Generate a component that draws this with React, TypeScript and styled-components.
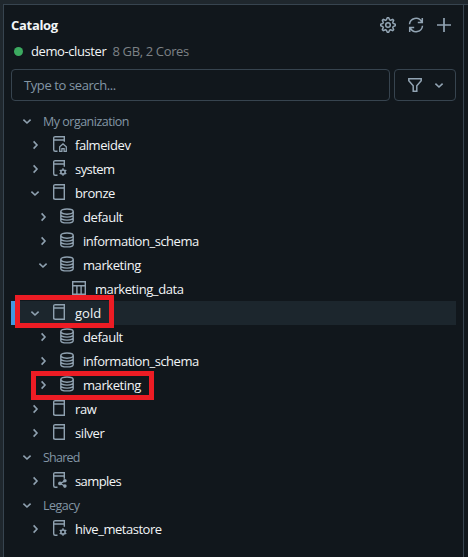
import React from "react";
import styled, { createGlobalStyle } from "styled-components";

const Global = createGlobalStyle`
  * { box-sizing: border-box; }
  body { margin: 0; background: #11171c; overflow: hidden; font-family: "Open Sans", "Noto Sans", sans-serif; font-size: 13px; color: #f2f5f7; }
  svg { display: block; flex: none; }
`;

const Frame = styled.div`
  position: relative;
  width: 468px;
  height: 557px;
  display: grid;
  grid-template-columns: 3px 461px 4px;
  grid-template-rows: 4px 553px;
  background: #11171c;
`;
const TopStrip = styled.div`
  grid-column: 1 / -1;
  background: #1f272d;
`;
const SideStrip = styled.div`
  background: #1f272d;
`;
const Panel = styled.section`
  border: solid #37444f;
  border-width: 1px 1px 0 1px;
  padding: 8px 7px 0;
`;
const RightStrip = styled.div`
  border-top: 1px solid #37444f;
`;
const Header = styled.header`
  height: 24px;
  display: flex;
  align-items: center;
  justify-content: space-between;
`;
const Text = styled.span<{ $spacing?: number; $tone?: string }>`
  letter-spacing: ${(p) => p.$spacing ?? -0.42}px;
  color: ${(p) => p.$tone ?? "#f2f5f7"};
  white-space: nowrap;
  line-height: 20px;
`;
const GroupText = styled(Text)`
  font-size: 12.5px;
  padding-top: 2px;
  color: #8396a5;
`;
const Title = styled.h1`
  margin: 0;
  font-size: 13px;
  line-height: 20px;
  font-weight: 700;
  letter-spacing: -0.3px;
`;
const Actions = styled.div`
  display: flex;
  gap: 12px;
  padding-right: 4px;
  color: #92a4b3;
`;
const Cluster = styled.div`
  height: 28px;
  display: flex;
  align-items: center;
`;
const StatusDot = styled.span`
  width: 9px;
  height: 9px;
  margin: 0 8px 0 3px;
  border-radius: 50%;
  background: #3caa60;
`;
const Specs = styled.span`
  margin-left: 6px;
  display: flex;
`;
const Controls = styled.div`
  margin-top: 4px;
  height: 32px;
  display: grid;
  grid-template-columns: 379px 62px;
  gap: 4px;
`;
const Field = styled.div`
  border: 1px solid #37444f;
  border-radius: 4px;
  padding-left: 12px;
  display: flex;
  align-items: center;
`;
const FilterButton = styled.button`
  border: 1px solid #37444f;
  border-radius: 4px;
  background: none;
  padding: 0 8px 0 12px;
  display: flex;
  align-items: center;
  justify-content: space-between;
  color: #92a4b3;
`;
const Tree = styled.div`
  margin-top: 8px;
`;
const Row = styled.div<{ $level: number; $active?: boolean }>`
  height: 24px;
  display: flex;
  align-items: center;
  padding-left: ${(p) => 8 + p.$level * 8}px;
  color: #8fa1b0;
  ${(p) => p.$active && "background: #1c262d; box-shadow: inset 4px 0 0 #4299e0;"}
`;
const IconSlot = styled.span`
  width: 16px;
  height: 16px;
  margin: 0 8px 2px 8px;
`;
const ChevronSlot = styled.span<{ $group?: boolean }>`
  width: 16px;
  height: 16px;
  margin: 0 ${(p) => (p.$group ? 8 : 0)}px 1px 0;
`;
const RedBox = styled.div<{ $x: number; $y: number; $w: number; $h: number }>`
  position: absolute;
  left: ${(p) => p.$x}px;
  top: ${(p) => p.$y}px;
  width: ${(p) => p.$w}px;
  height: ${(p) => p.$h}px;
  border: 5px solid #ed1c24;
`;

const Icon = ({ children, sw = 1.4 }: { children: React.ReactNode; sw?: number }) => (
  <svg width="16" height="16" viewBox="0 0 16 16" fill="none" stroke="currentColor" strokeWidth={sw}>
    {children}
  </svg>
);
const Chevron = ({ open }: { open?: boolean }) => (
  <Icon sw={1.6}>
    <path d={open ? "M4.4 6.6 8 10l3.6-3.4" : "M6.6 4.4 10 8l-3.4 3.6"} />
  </Icon>
);

type Kind = "home" | "system" | "catalog" | "schema" | "table" | "share";

const gearPath = Array.from({ length: 32 }, (_, i) => {
  const r = i % 4 < 2 ? 7.3 : 5.4;
  const a = ((i - 0.5) * Math.PI) / 16 - Math.PI / 2;
  return `${i ? "L" : "M"}${(8 + r * Math.cos(a)).toFixed(2)} ${(8 + r * Math.sin(a)).toFixed(2)}`;
}).join("") + "Z";

const SmallGear = () => (
  <>
    <circle cx="12" cy="12" r="2.1" strokeWidth="1.5" />
    <path strokeWidth="1.4" d="M12 8.2v1.7M12 14.1v1.7M8.7 10.1l1.5.9M13.8 13l1.5.9M8.7 13.9l1.5-.9M13.8 11l1.5-.9" />
  </>
);

const KindIcon = ({ kind }: { kind: Kind }) => {
  if (kind === "schema")
    return (
      <Icon>
        <ellipse cx="8" cy="3.6" rx="6.2" ry="2.6" />
        <path d="M1.8 3.6v8.8c0 1.4 2.8 2.5 6.2 2.5s6.2-1.1 6.2-2.5V3.6M1.8 6.6c0 1.4 2.8 2.5 6.2 2.5s6.2-1.1 6.2-2.5M1.8 9.6c0 1.4 2.8 2.5 6.2 2.5s6.2-1.1 6.2-2.5" />
      </Icon>
    );
  if (kind === "table")
    return (
      <Icon>
        <path d="M1.7 1.7h12.6v12.6H1.7zM1.7 5.7h12.6M5.9 5.7v8.6M10.1 5.7v8.6" />
      </Icon>
    );
  if (kind === "catalog")
    return (
      <Icon>
        <path d="M2.7 15.3V2.2C2.7 1.3 3.3.7 4.2.7h9.1v14.6H4.2c-.9 0-1.5-.6-1.5-1.5M2.7 4h10.6" />
      </Icon>
    );
  return (
    <Icon>
      <path d={`M6.5 15.3H4.2c-.9 0-1.5-.6-1.5-1.5V2.2C2.7 1.3 3.3.7 4.2.7h9.1v${kind === "home" ? 5 : 6}M2.9 4h10.4`} />
      {kind === "home" && <path d="M8.7 15.3v-4.6L12 7.9l3.3 2.8v4.6h-2.2v-2.6h-2.2v2.6z" strokeWidth="1.3" />}
      {kind === "system" && <SmallGear />}
      {kind === "share" && (
        <>
          <path d="M9.3 11.4l4.4-2.3M9.3 11.4l4.4 2.7" strokeWidth="1.2" />
          <g fill="currentColor" stroke="none">
            <circle cx="9" cy="11.4" r="1.9" />
            <circle cx="13.9" cy="8.8" r="1.8" />
            <circle cx="13.9" cy="14.1" r="1.8" />
          </g>
        </>
      )}
    </Icon>
  );
};

interface Item {
  label: string;
  level: number;
  kind?: Kind;
  open?: boolean;
  active?: boolean;
  spacing?: number;
}
const items: Item[] = [
  { label: "My organization", level: 0, open: true, spacing: -0.5 },
  { label: "falmeidev", level: 1, kind: "home" },
  { label: "system", level: 1, kind: "system", spacing: -0.55 },
  { label: "bronze", level: 1, kind: "catalog", open: true },
  { label: "default", level: 2, kind: "schema" },
  { label: "information_schema", level: 2, kind: "schema", spacing: -0.48 },
  { label: "marketing", level: 2, kind: "schema", open: true },
  { label: "marketing_data", level: 3.5, kind: "table" },
  { label: "gold", level: 1, kind: "catalog", open: true, active: true, spacing: 0 },
  { label: "default", level: 2, kind: "schema" },
  { label: "information_schema", level: 2, kind: "schema", spacing: -0.48 },
  { label: "marketing", level: 2, kind: "schema" },
  { label: "raw", level: 1, kind: "catalog" },
  { label: "silver", level: 1, kind: "catalog" },
  { label: "Shared", level: 0, open: true, spacing: -0.75 },
  { label: "samples", level: 1, kind: "share", spacing: -0.58 },
  { label: "Legacy", level: 0, open: true, spacing: -0.5 },
  { label: "hive_metastore", level: 1, kind: "system", spacing: -0.47 },
];

export default function App() {
  return (
    <Frame>
      <Global />
      <TopStrip />
      <SideStrip />
      <Panel>
        <Header>
          <Title>Catalog</Title>
          <Actions>
            <Icon sw={1.5}>
              <path d={gearPath} strokeLinejoin="round" />
              <circle cx="8" cy="8" r="2.3" />
            </Icon>
            <Icon sw={1.5}>
              <path d="M1.5 7.3A6.5 6.5 0 0 1 13.7 4.8M14.5 8.7A6.5 6.5 0 0 1 2.3 11.2M14.3 1v4.5H9.8M1.7 15v-4.5h4.5" />
            </Icon>
            <Icon sw={1.7}>
              <path d="M8 1v14M1 8h14" />
            </Icon>
          </Actions>
        </Header>
        <Cluster>
          <StatusDot />
          <Text $spacing={-0.4}>demo-cluster</Text>
          <Specs>
            <Text $tone="#7d8286" $spacing={-0.35}>8 GB, 2 Cores</Text>
          </Specs>
        </Cluster>
        <Controls>
          <Field>
            <Text $tone="#8396a5" $spacing={-0.4}>Type to search...</Text>
          </Field>
          <FilterButton>
            <Icon sw={1.5}>
              <path d="M1.8 1.8h12.4v2L9.8 8.7v5.5H6.2V8.7L1.8 3.8z" />
            </Icon>
            <Chevron open />
          </FilterButton>
        </Controls>
        <Tree>
          {items.map((it, i) => (
            <Row key={i} $level={it.level} $active={it.active}>
              <ChevronSlot $group={!it.kind}>{it.kind !== "table" && <Chevron open={it.open} />}</ChevronSlot>
              {it.kind ? (
                <>
                  <IconSlot>
                    <KindIcon kind={it.kind} />
                  </IconSlot>
                  <Text $spacing={it.spacing}>{it.label}</Text>
                </>
              ) : (
                <GroupText $spacing={it.spacing} $tone="#8396a5">{it.label}</GroupText>
              )}
            </Row>
          ))}
        </Tree>
      </Panel>
      <RightStrip />
      <RedBox $x={15} $y={295} $w={99} $h={33} />
      <RedBox $x={31} $y={371} $w={123} $h={29} />
    </Frame>
  );
}
